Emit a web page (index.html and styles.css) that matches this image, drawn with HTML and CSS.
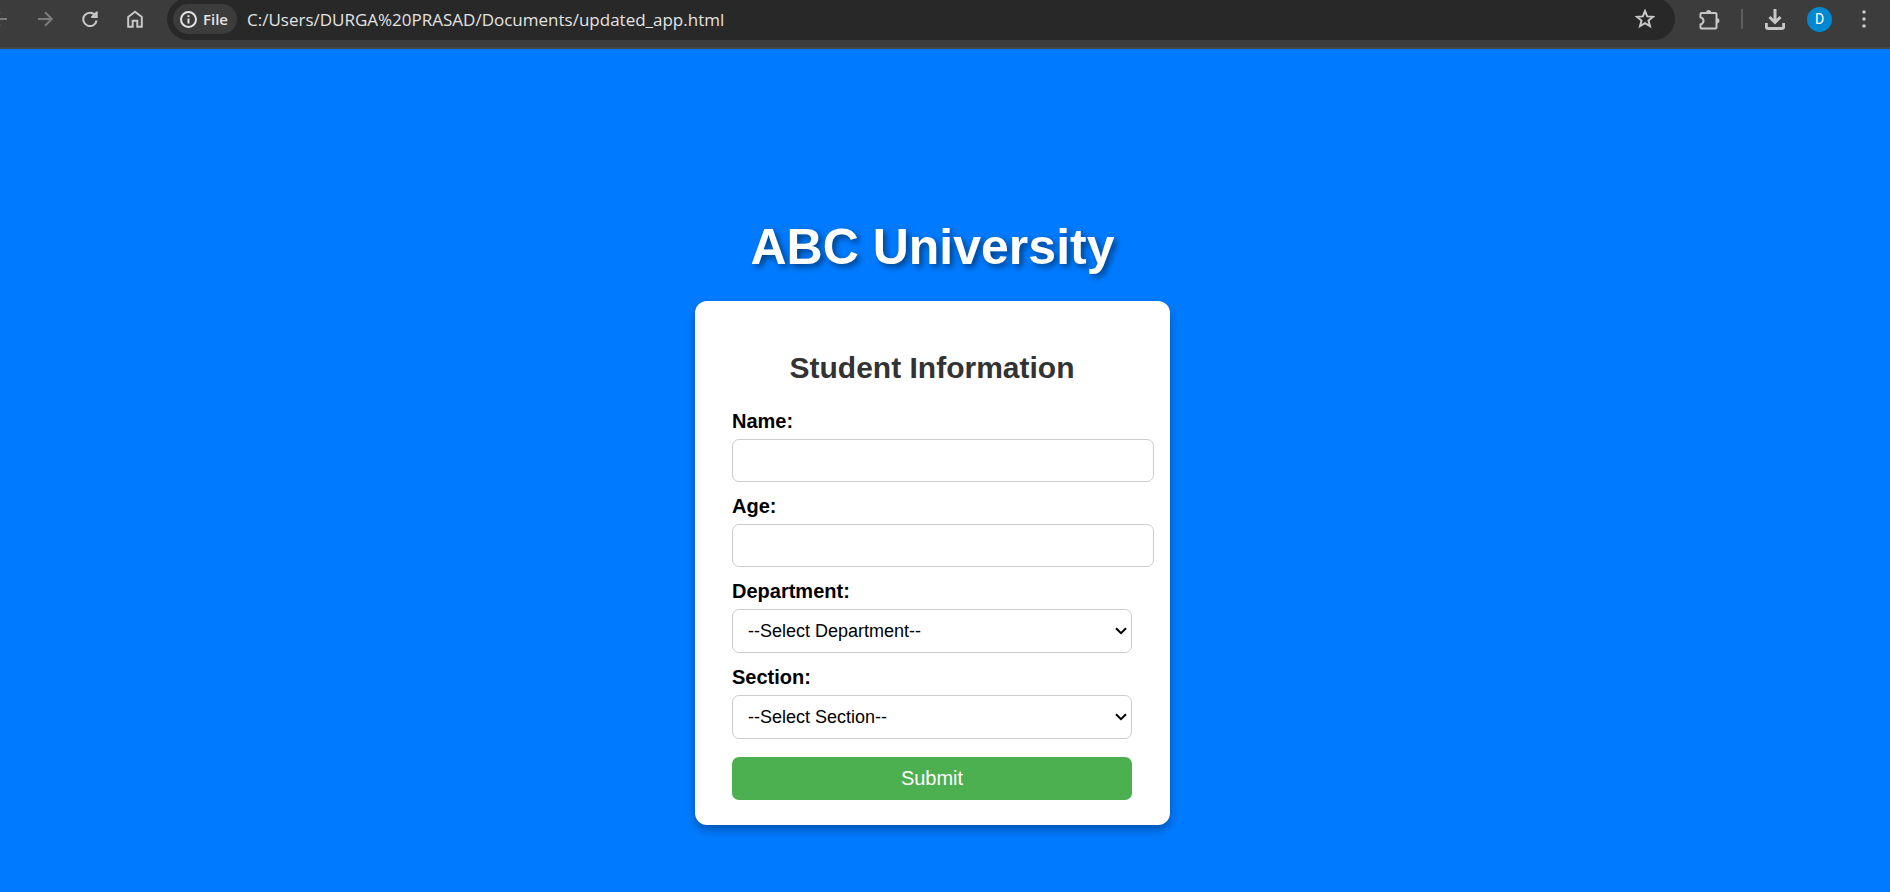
FILE: index.html
```html
<!DOCTYPE html>
<html lang="en">
<head>
<meta charset="utf-8">
<title>ABC University</title>
<link rel="stylesheet" href="styles.css">
</head>
<body>
<header class="toolbar">
  <nav class="nav">
    <button class="icon-btn dim" type="button" aria-label="Back"><svg width="16" height="16" viewBox="0 0 16 16"><path d="M15 8H2M8 1.200L1.200 8L8 14.800"/></svg></button>
    <button class="icon-btn dim" type="button" aria-label="Forward"><svg width="16" height="16" viewBox="0 0 16 16"><path d="M1 8H14M8 1.200L14.800 8L8 14.800"/></svg></button>
    <button class="icon-btn" type="button" aria-label="Reload"><svg width="16" height="16" viewBox="0 0 16 16"><path d="M13.500 4.500A6.700 6.700 0 1 0 14.600 9.500M14.700 .5V6H9.200M14 2L10.500 5.500"/></svg></button>
    <button class="icon-btn" type="button" aria-label="Home"><svg width="16" height="18" viewBox="0 0 16 18"><path d="M1.200 7L8 1.800L14.800 7V16.800H10.300V10.800H5.700V16.800H1.200Z"/></svg></button>
  </nav>
  <div class="omnibox">
    <button class="chip" type="button"><svg width="17" height="17" viewBox="0 0 17 17"><circle cx="8.500" cy="8.500" r="7.500"/><path d="M8.500 7.500V12.500M8.500 4.300V6"/></svg>File</button>
    <input class="url" type="text" aria-label="Address" value="C:/Users/DURGA%20PRASAD/Documents/updated_app.html">
    <button class="icon-btn" type="button" aria-label="Bookmark"><svg width="20" height="20" viewBox="0 0 20 20"><path d="M10 2L12.200 7.400L18 7.800L13.500 11.500L15 17.200L10 14.100L5 17.200L6.500 11.500L2 7.800L7.800 7.400Z"/></svg></button>
  </div>
  <div class="actions">
    <button class="icon-btn" type="button" aria-label="Extensions"><svg width="21" height="21" viewBox="0 0 21 21"><path d="M2.500 4H16.500Q17.500 4 17.500 5V18.500Q17.500 19.500 16.500 19.500H2.500Q1.500 19.500 1.500 18.500V15.500Q4.500 14.500 4.500 11.800T1.500 8.200V5Q1.500 4 2.500 4Z"/><path class="fill" d="M7 4A2.600 2.900 0 0 1 12.200 4ZM17.500 9A2.900 2.700 0 0 1 17.500 14.400Z"/></svg></button>
    <span class="divider"></span>
    <button class="icon-btn" type="button" aria-label="Downloads"><svg width="20" height="21" viewBox="0 0 20 21"><path class="bold" d="M10 0V13M4.500 8L10 13.500L15.500 8M1.300 14V17.500Q1.300 19.500 3.300 19.500H16.700Q18.700 19.500 18.700 17.500V14"/></svg></button>
    <button class="avatar" type="button">D</button>
    <button class="icon-btn" type="button" aria-label="Menu"><svg width="4" height="18" viewBox="0 0 4 18"><g class="fill"><circle cx="2" cy="2" r="1.800"/><circle cx="2" cy="9" r="1.800"/><circle cx="2" cy="16" r="1.800"/></g></svg></button>
  </div>
</header>
<main class="page">
  <h1 class="title">ABC University</h1>
  <form class="card">
    <h2 class="heading">Student Information</h2>
    <label class="label" for="name">Name:</label>
    <input class="field text" id="name" type="text">
    <label class="label" for="age">Age:</label>
    <input class="field text" id="age" type="text">
    <label class="label" for="department">Department:</label>
    <div class="picker">
      <select class="field choice" id="department"><option>--Select Department--</option></select>
      <svg class="arrow" width="12" height="8" viewBox="0 0 12 8"><path d="M1 1.200L6 6.200L11 1.200"/></svg>
    </div>
    <label class="label" for="section">Section:</label>
    <div class="picker">
      <select class="field choice" id="section"><option>--Select Section--</option></select>
      <svg class="arrow" width="12" height="8" viewBox="0 0 12 8"><path d="M1 1.200L6 6.200L11 1.200"/></svg>
    </div>
    <button class="submit" type="button">Submit</button>
  </form>
</main>
</body>
</html>
```
FILE: styles.css
```css
* { box-sizing: border-box; }
body {
  margin: 0;
  min-height: 100vh;
  display: flex;
  flex-direction: column;
  background: #007bff;
  font-family: "Liberation Sans", Arial, sans-serif;
}
button { border: 0; padding: 0; background: none; }

.toolbar {
  display: flex;
  align-items: flex-start;
  height: 49px;
  background: #3c3c3c;
  border-bottom: 2px solid #474747;
  overflow: hidden;
}
.nav { display: flex; gap: 21px; margin-left: -12px; padding: 7px 20px 0 0; }
.icon-btn {
  display: flex;
  align-items: center;
  justify-content: center;
  width: 24px;
  height: 24px;
  color: #c7c7c7;
}
.dim { color: #7c7c7c; }
.icon-btn svg, .chip svg { fill: none; stroke: currentColor; stroke-width: 2; }
.icon-btn .bold { stroke-width: 3; }
.icon-btn .fill { fill: currentColor; stroke: none; }
.omnibox {
  flex: 1;
  display: flex;
  align-items: center;
  height: 42px;
  margin-top: -2px;
  padding: 0 18px 0 6px;
  border-radius: 21px;
  background: #282828;
}
.chip {
  display: flex;
  align-items: center;
  gap: 6px;
  height: 30px;
  padding: 0 9px 0 7px;
  border-radius: 15px;
  background: #3c3c3c;
  color: #e3e3e3;
  font: 600 15px "Open Sans", "Noto Sans", sans-serif;
}
.url {
  flex: 1;
  min-width: 0;
  margin-left: 10px;
  padding: 0;
  border: 0;
  outline: 0;
  background: none;
  color: #e3e3e3;
  font: 17px "Open Sans", "Noto Sans", sans-serif;
}
.actions { display: flex; align-items: center; gap: 20px; height: 38px; padding: 0 14px 0 22px; }
.divider { width: 2px; height: 20px; background: #5e5e5e; }
.avatar {
  width: 25px;
  height: 25px;
  border-radius: 50%;
  background: #0288d1;
  color: #fff;
  font: 14px Roboto, sans-serif;
}

.page {
  flex: 1;
  display: flex;
  flex-direction: column;
  align-items: center;
  gap: 25px;
  padding: 170px 25px 67px 0;
}
.title {
  margin: 0;
  color: #fff;
  font-size: 50px;
  line-height: 57px;
  text-shadow: 3px 3px 6px rgba(0, 0, 0, 0.5);
}
.card {
  display: flex;
  flex-direction: column;
  width: 475px;
  max-width: 100%;
  padding: 50px 38px 25px 37px;
  border-radius: 12px;
  background: #fff;
  box-shadow: 0 5px 10px rgba(0, 0, 0, 0.3);
}
.heading {
  margin: 0 0 25px;
  color: #333;
  font-size: 30px;
  line-height: 34px;
  text-align: center;
}
.label { margin-bottom: 6px; font-size: 20px; font-weight: bold; line-height: 23px; }
.field {
  margin: 0 0 13px;
  border: 1px solid #ccc;
  border-radius: 7px;
  background: #fff;
  color: #000;
  font: 18px "Liberation Sans", Arial, sans-serif;
}
.text { height: 43px; margin-right: -22px; padding: 0 10px; }
.picker { position: relative; display: flex; margin-bottom: 13px; }
.choice { flex: 1; height: 44px; margin: 0; padding: 0 24px 0 15px; appearance: none; }
.arrow {
  position: absolute;
  top: 18px;
  right: 5px;
  fill: none;
  stroke: #000;
  stroke-width: 2;
  pointer-events: none;
}
.submit {
  height: 43px;
  margin-top: 5px;
  border-radius: 7px;
  background: #4caf50;
  color: #fff;
  font: 20px "Liberation Sans", Arial, sans-serif;
}
```
